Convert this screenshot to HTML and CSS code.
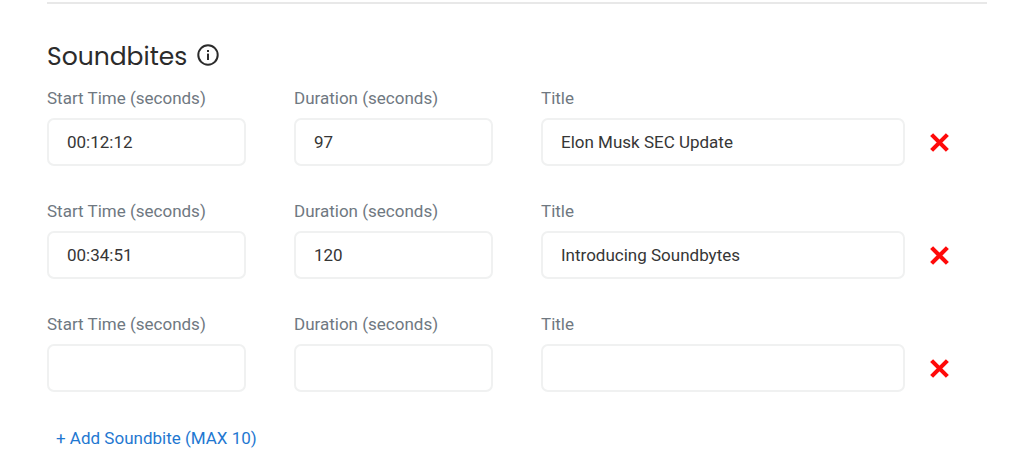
FILE: index.html
```html
<!DOCTYPE html>
<html lang="en">
<head>
  <meta charset="UTF-8" />
  <meta name="viewport" content="width=device-width, initial-scale=1.0"/>
  <title>Soundbites</title>
  <link rel="stylesheet" href="styles.css">
</head>
<body>
  <form class="soundbites">
    <div class="heading">
      <h2>Soundbites</h2>
      <svg class="info-icon" viewBox="0 0 22 22" role="img" aria-label="Info">
        <circle cx="11" cy="11" r="9.7" fill="none" stroke="currentColor" stroke-width="2"/>
        <rect x="10" y="9.6" width="2" height="6.4" fill="currentColor"/>
        <rect x="10" y="6" width="2" height="2" fill="currentColor"/>
      </svg>
    </div>

    <div class="row">
      <div class="field">
        <label for="start-1">Start Time (seconds)</label>
        <input type="text" id="start-1" value="00:12:12">
      </div>
      <div class="field">
        <label for="duration-1">Duration (seconds)</label>
        <input type="text" id="duration-1" value="97">
      </div>
      <div class="field title">
        <label for="title-1">Title</label>
        <input type="text" id="title-1" value="Elon Musk SEC Update">
      </div>
      <button type="button" class="remove" aria-label="Remove soundbite">
        <svg viewBox="0 0 20 20"><path d="M2.5 2.5L17.5 17.5M17.5 2.5L2.5 17.5"/></svg>
      </button>
    </div>

    <div class="row">
      <div class="field">
        <label for="start-2">Start Time (seconds)</label>
        <input type="text" id="start-2" value="00:34:51">
      </div>
      <div class="field">
        <label for="duration-2">Duration (seconds)</label>
        <input type="text" id="duration-2" value="120">
      </div>
      <div class="field title">
        <label for="title-2">Title</label>
        <input type="text" id="title-2" value="Introducing Soundbytes">
      </div>
      <button type="button" class="remove" aria-label="Remove soundbite">
        <svg viewBox="0 0 20 20"><path d="M2.5 2.5L17.5 17.5M17.5 2.5L2.5 17.5"/></svg>
      </button>
    </div>

    <div class="row">
      <div class="field">
        <label for="start-3">Start Time (seconds)</label>
        <input type="text" id="start-3">
      </div>
      <div class="field">
        <label for="duration-3">Duration (seconds)</label>
        <input type="text" id="duration-3">
      </div>
      <div class="field title">
        <label for="title-3">Title</label>
        <input type="text" id="title-3">
      </div>
      <button type="button" class="remove" aria-label="Remove soundbite">
        <svg viewBox="0 0 20 20"><path d="M2.5 2.5L17.5 17.5M17.5 2.5L2.5 17.5"/></svg>
      </button>
    </div>

    <button type="button" class="add">+ Add Soundbite (MAX 10)</button>
  </form>
</body>
</html>
```

FILE: styles.css
```css
:root {
  --text: #2b2b2b;
  --input-text: #363636;
  --label: #6f7881;
  --border: #f0f1f1;
  --divider: #e8e8e8;
  --link: #1f78d1;
  --danger: #ff0a0a;
}

* {
  box-sizing: border-box;
}

body {
  margin: 0;
  padding: 2px 37px 0 47px;
  background-color: #fff;
  color: var(--text);
  font-family: Roboto, sans-serif;
  font-size: 17px;
  line-height: 24px;
}

.soundbites {
  border-top: 2px solid var(--divider);
  padding-top: 36px;
}

.heading {
  display: flex;
  align-items: center;
  gap: 10px;
  margin-bottom: 12px;
}

.heading h2 {
  margin: 0;
  font-family: Poppins, Inter, sans-serif;
  font-size: 25px;
  font-weight: 400;
  line-height: 34px;
}

.info-icon {
  width: 22px;
  height: 22px;
  margin-bottom: 4px;
}

.row {
  display: grid;
  grid-template-columns: repeat(12, 1fr);
  column-gap: 48px;
  margin-bottom: 33px;
}

.field {
  grid-column: span 3;
  display: flex;
  flex-direction: column;
  gap: 8px;
}

.field.title {
  grid-column: span 5;
}

.field label {
  color: var(--label);
}

.field input {
  width: 100%;
  height: 48px;
  padding: 0 18px;
  border: 2px solid var(--border);
  border-radius: 7px;
  background-color: #fff;
  color: var(--input-text);
  font: inherit;
}

.remove {
  align-self: end;
  display: flex;
  align-items: center;
  height: 48px;
  margin-left: -24px;
  padding: 0;
  border: none;
  background: none;
  cursor: pointer;
}

.remove svg {
  width: 21px;
  height: 21px;
  fill: none;
  stroke: var(--danger);
  stroke-width: 4;
}

.add {
  padding: 1px 9px;
  border: none;
  background: none;
  color: var(--link);
  font: inherit;
  cursor: pointer;
}
```
